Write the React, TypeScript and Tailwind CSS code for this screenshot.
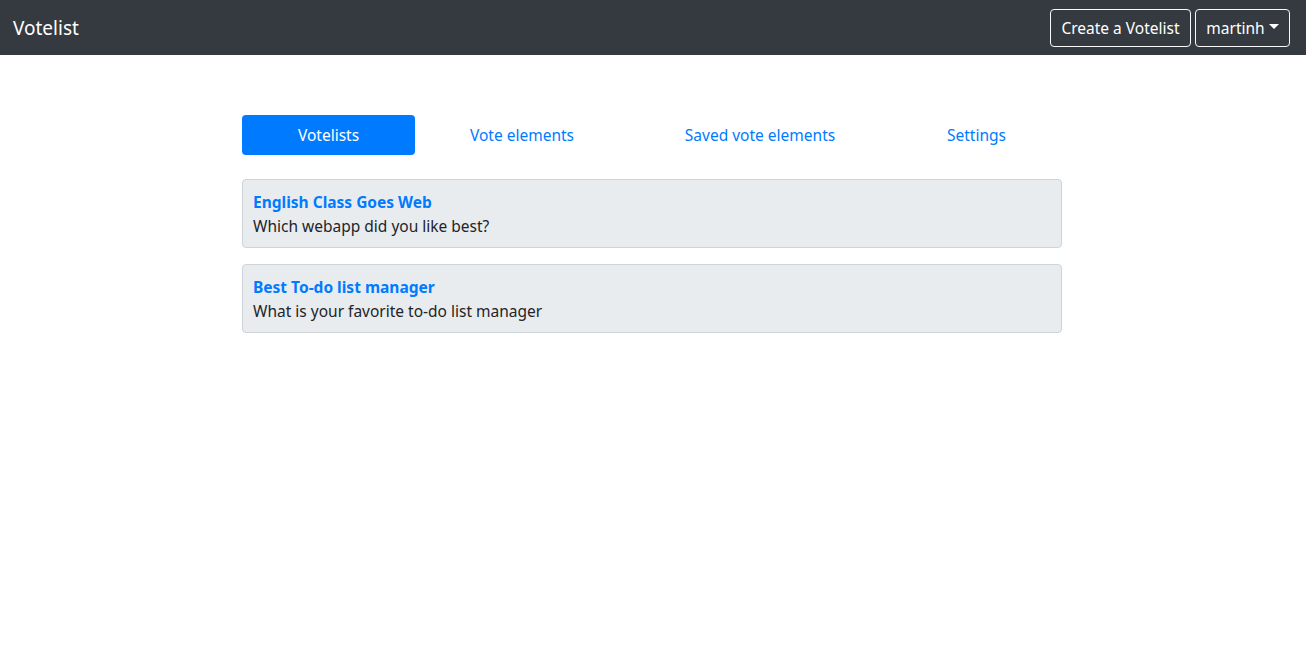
import React from "react";

const font = { fontFamily: '"Noto Sans", "Open Sans", Arial, sans-serif' };

export default function App() {
  return (
    <div className="min-h-[669px] bg-white text-[#212529]" style={font}>
      <nav className="h-[55px] bg-[#343a40] flex items-center justify-between pl-[13px] pr-[16px]">
        <span className="text-[19px] text-white leading-[30px]">Votelist</span>
        <div className="flex items-center gap-[4px]">
          <button className="h-[38px] w-[141px] border border-[#f8f9fa] rounded-[4px] text-white text-[15.5px] leading-[24px]">
            Create a Votelist
          </button>
          <button className="h-[38px] w-[95px] border border-[#f8f9fa] rounded-[4px] text-white text-[15.5px] leading-[24px] flex items-center justify-center gap-[4px]">
            martinh
            <span className="inline-block w-0 h-0 border-l-[5px] border-r-[5px] border-t-[5px] border-l-transparent border-r-transparent border-t-white mt-[-2px]" />
          </button>
        </div>
      </nav>
      <div className="w-[820px] ml-[242px] pt-[60px]">
        <div className="flex text-[15.5px] leading-[24px]">
          <div className="w-[173px] h-[40px] flex items-center justify-center rounded-[4px] bg-[#007bff] text-white">Votelists</div>
          <div className="w-[214px] h-[40px] flex items-center justify-center text-[#007bff]">Vote elements</div>
          <div className="w-[262px] h-[40px] flex items-center justify-center text-[#007bff]">Saved vote elements</div>
          <div className="w-[171px] h-[40px] flex items-center justify-center text-[#007bff]">Settings</div>
        </div>
        <div className="mt-[24px] flex flex-col gap-[16px]">
          <div className="h-[69px] bg-[#e9ecef] border border-[#ced4da] rounded-[4px] px-[10px] pt-[10px] text-[15.5px] leading-[24px]">
            <div className="font-bold text-[#007bff]">English Class Goes Web</div>
            <div>Which webapp did you like best?</div>
          </div>
          <div className="h-[69px] bg-[#e9ecef] border border-[#ced4da] rounded-[4px] px-[10px] pt-[10px] text-[15.5px] leading-[24px]">
            <div className="font-bold text-[#007bff]">Best To-do list manager</div>
            <div>What is your favorite to-do list manager</div>
          </div>
        </div>
      </div>
    </div>
  );
}
